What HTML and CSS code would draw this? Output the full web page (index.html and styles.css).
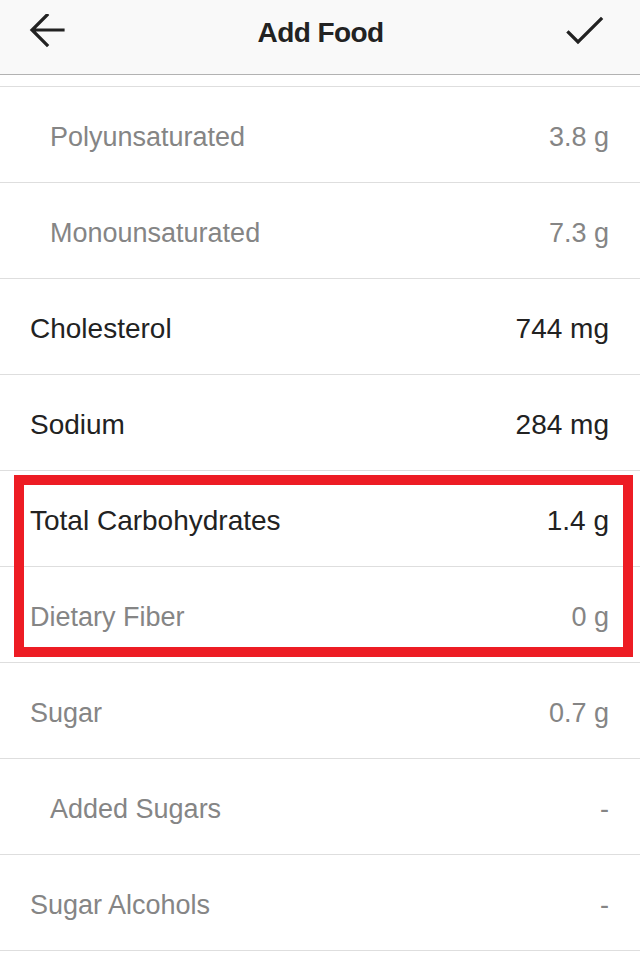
FILE: index.html
```html
<!DOCTYPE html>
<html>
<head>
<meta charset="utf-8">
<link rel="stylesheet" href="styles.css">
</head>
<body>
<div class="screen">
  <header class="topbar">
    <svg class="icon icon-back" width="40" height="40" viewBox="0 0 40 40">
      <path d="M37 16 H7 M21 1 L6 16 L21 31" fill="none" stroke="#222" stroke-width="3.2" stroke-linecap="square" stroke-linejoin="miter"/>
    </svg>
    <h1 class="title">Add Food</h1>
    <svg class="icon icon-check" width="40" height="40" viewBox="0 0 40 40">
      <path d="M3.5 17.5 L13 27 L36 4" fill="none" stroke="#222" stroke-width="3.2" stroke-linecap="square" stroke-linejoin="miter"/>
    </svg>
  </header>
  <div class="spacer"></div>
  <ul class="list">
    <li class="row sub muted"><span class="label">Polyunsaturated</span><span class="value">3.8 g</span></li>
    <li class="row sub muted"><span class="label">Monounsaturated</span><span class="value">7.3 g</span></li>
    <li class="row"><span class="label">Cholesterol</span><span class="value">744 mg</span></li>
    <li class="row"><span class="label">Sodium</span><span class="value">284 mg</span></li>
    <li class="row"><span class="label">Total Carbohydrates</span><span class="value">1.4 g</span></li>
    <li class="row muted"><span class="label">Dietary Fiber</span><span class="value">0 g</span></li>
    <li class="row muted"><span class="label">Sugar</span><span class="value">0.7 g</span></li>
    <li class="row sub muted"><span class="label">Added Sugars</span><span class="value">-</span></li>
    <li class="row muted"><span class="label">Sugar Alcohols</span><span class="value">-</span></li>
    <li class="row muted"><span class="label">&nbsp;</span><span class="value"></span></li>
  </ul>
  <div class="highlight"></div>
</div>
</body>
</html>
```

FILE: styles.css
```css
html, body {
  margin: 0;
  padding: 0;
  background: #ffffff;
}

body {
  font-family: "Liberation Sans", Arial, sans-serif;
  overflow: hidden;
}

.screen {
  position: relative;
  width: 640px;
  height: 967px;
  overflow: hidden;
  background: #ffffff;
}

.topbar {
  height: 74px;
  background: #f9f9f9;
  border-bottom: 1px solid #b2b2b2;
  display: flex;
  align-items: center;
  justify-content: space-between;
  padding: 0 35px 0 26px;
  box-sizing: content-box;
}

.icon {
  display: block;
  flex: none;
}

.icon-back {
  margin-top: -6px;
}

.icon-check {
  margin-top: -4px;
}

.title {
  margin: 0;
  font-size: 28px;
  font-weight: 700;
  letter-spacing: -0.6px;
  color: #222222;
  line-height: 1;
  margin-top: -9px;
  padding-left: 10px;
}

.spacer {
  height: 11px;
}

.list {
  list-style: none;
  margin: 0;
  padding: 0;
}

.row {
  height: 90px;
  padding-top: 5px;
  border-top: 1px solid #dedede;
  display: flex;
  align-items: center;
  justify-content: space-between;
  padding-left: 30px;
  padding-right: 31px;
  font-size: 28px;
  color: #222222;
}

.row.sub {
  padding-left: 50px;
}

.row.muted {
  color: #858585;
  font-size: 27px;
}

.label, .value {
  white-space: nowrap;
}

.highlight {
  position: absolute;
  left: 14px;
  top: 475px;
  width: 619px;
  height: 182px;
  box-sizing: border-box;
  border: 10px solid #ed1c24;
  pointer-events: none;
}
```
